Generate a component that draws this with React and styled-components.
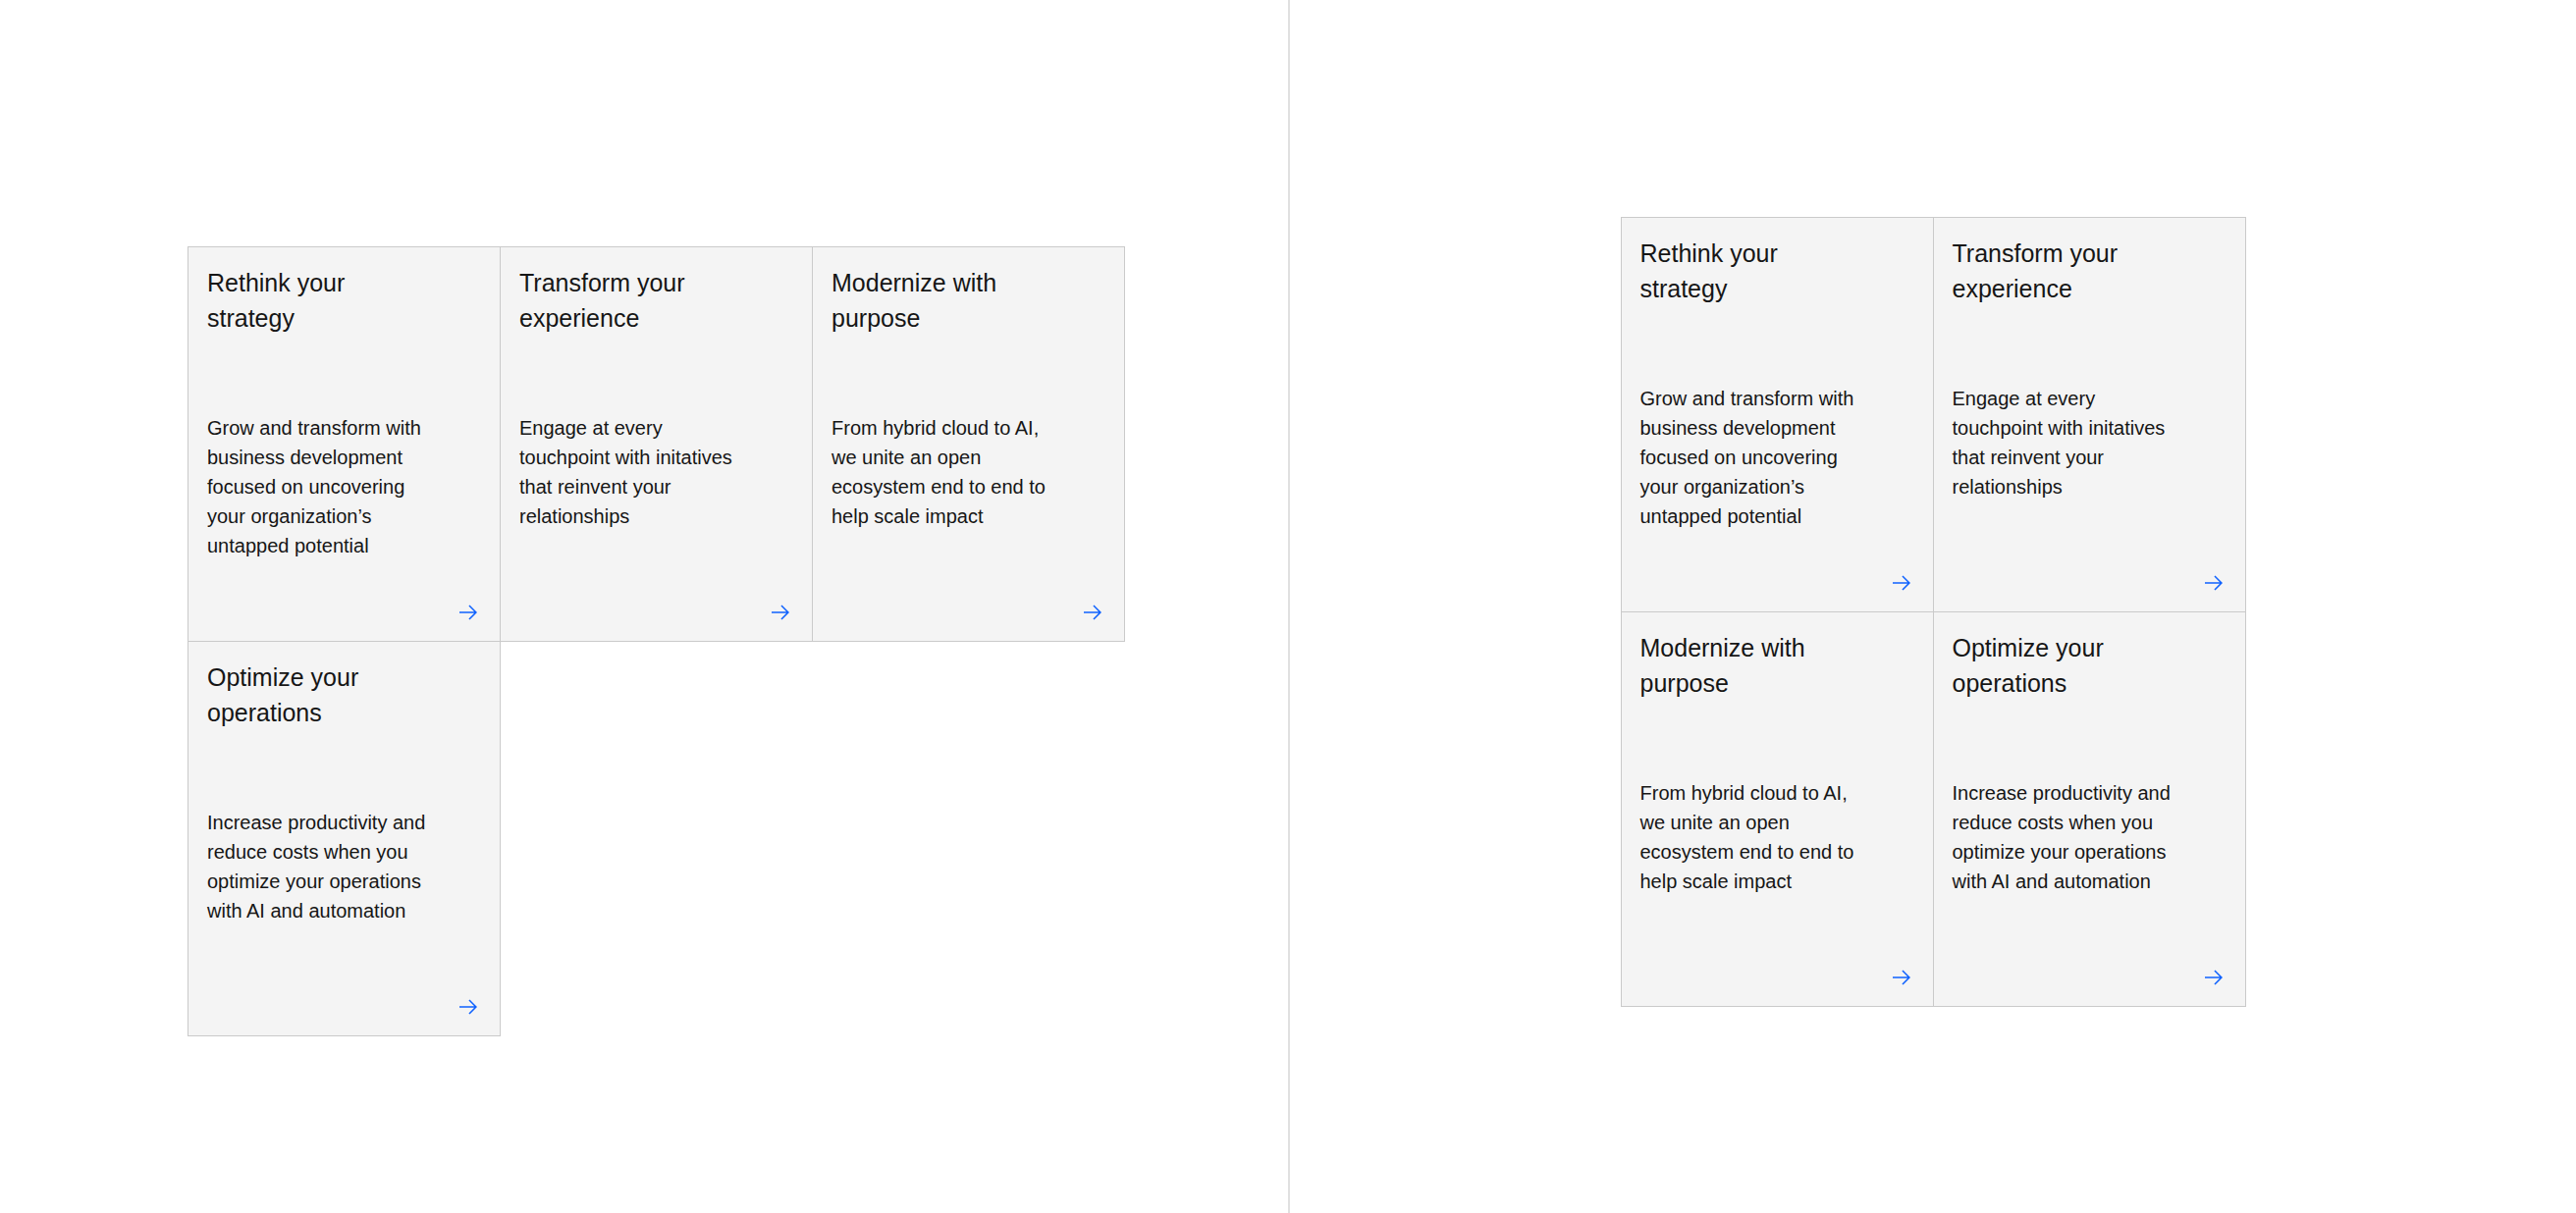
import React from "react";
import styled, { createGlobalStyle } from "styled-components";

const GlobalStyle = createGlobalStyle`
  html, body { margin: 0; padding: 0; background: #ffffff; }
  body { font-family: "Liberation Sans", Arial, sans-serif; color: #161616; }
`;

const cards = {
  strategy: {
    title: "Rethink your strategy",
    body: "Grow and transform with business development focused on uncovering your organization’s untapped potential",
  },
  experience: {
    title: "Transform your experience",
    body: "Engage at every touchpoint with initatives that reinvent your relationships",
  },
  purpose: {
    title: "Modernize with purpose",
    body: "From hybrid cloud to AI, we unite an open ecosystem end to end to help scale impact",
  },
  operations: {
    title: "Optimize your operations",
    body: "Increase productivity and reduce costs when you optimize your operations with AI and automation",
  },
};

const order = ["strategy", "experience", "purpose", "operations"];

function ArrowRight() {
  return (
    <svg width={24} height={24} viewBox="0 0 32 32" fill="#0f62fe" aria-hidden="true">
      <path d="M18 6 16.57 7.393 24.15 15 4 15 4 17 24.15 17 16.57 24.573 18 26 28 16 18 6z" />
    </svg>
  );
}

function CardGroup({ columns, align }) {
  return (
    <Pane $align={align}>
      <Grid $columns={columns}>
        {order.map((key) => (
          <Card key={key} href="#">
            <Title>{cards[key].title}</Title>
            <Body>{cards[key].body}</Body>
            <Footer>
              <ArrowRight />
            </Footer>
          </Card>
        ))}
      </Grid>
    </Pane>
  );
}

export default function App() {
  return (
    <>
      <GlobalStyle />
      <Page>
        <CardGroup columns={3} align="left" />
        <Divider />
        <CardGroup columns={2} align="center" />
      </Page>
    </>
  );
}

const Page = styled.div`
  display: flex;
  width: 2624px;
  height: 1236px;
  overflow: hidden;
`;

const Pane = styled.section`
  flex: ${(p) => (p.$align === "center" ? "1 1 auto" : "0 0 1312px")};
  display: flex;
  justify-content: ${(p) => (p.$align === "center" ? "center" : "flex-start")};
  align-items: flex-start;
  padding: ${(p) => (p.$align === "center" ? "221px 0 0 0" : "251px 0 0 191px")};
  box-sizing: border-box;
`;

const Divider = styled.div`
  flex: 0 0 2px;
  background: #e0e0e0;
`;

const Grid = styled.div`
  display: grid;
  grid-template-columns: repeat(${(p) => p.$columns}, 318px);
  grid-auto-rows: 402px;
  border-top: 1px solid #cacaca;
  border-left: 1px solid #cacaca;
`;

const Card = styled.a`
  display: flex;
  flex-direction: column;
  box-sizing: border-box;
  padding: 18px 20px 17px 19px;
  background: #f4f4f4;
  border-right: 1px solid #cacaca;
  border-bottom: 1px solid #cacaca;
  color: #161616;
  text-decoration: none;
`;

const Title = styled.h3`
  margin: 0;
  max-width: 236px;
  font-size: 25px;
  line-height: 36px;
  font-weight: 400;
`;

const Body = styled.p`
  margin: 79px 0 0 0;
  max-width: 236px;
  font-size: 20px;
  line-height: 30px;
  font-weight: 400;
`;

const Footer = styled.div`
  margin-top: auto;
  display: flex;
  justify-content: flex-end;
  line-height: 0;
`;
